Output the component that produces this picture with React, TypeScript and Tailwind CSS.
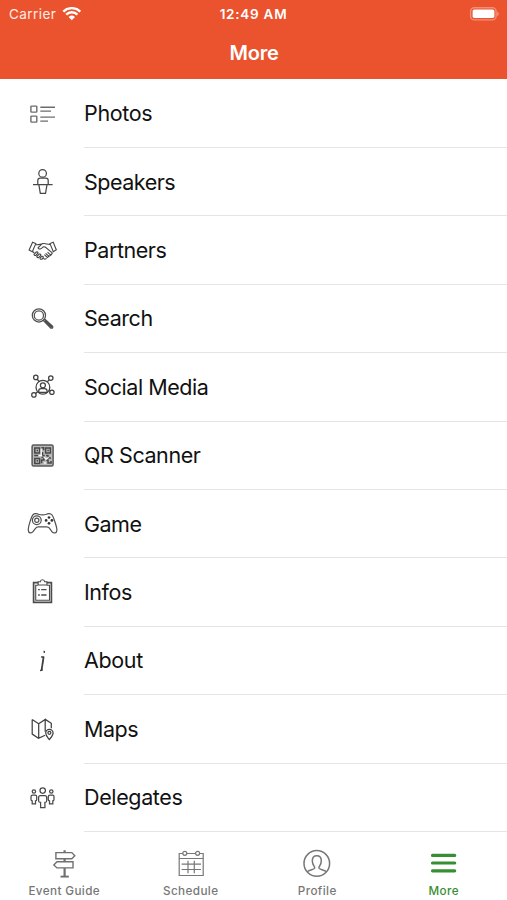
import type { ReactNode } from "react";

type MenuItem = {
  label: string;
  icon: ReactNode;
  spacing: string;
};

const menu: MenuItem[] = [
  {
    label: "Photos",
    spacing: "tracking-[-0.35px]",
    icon: (
      <g stroke="#6c6c6c" strokeWidth="1.4">
        <rect x="6.9" y="10.1" width="5.9" height="6" rx=".7" />
        <rect x="6.9" y="20.1" width="5.9" height="6" rx=".7" />
        <path d="M16.3 11.2H31M16.3 15.1H27M16.3 21.1H31M16.3 25.1H24" />
      </g>
    ),
  },
  {
    label: "Speakers",
    spacing: "tracking-[-0.48px]",
    icon: (
      <g stroke="#484848" strokeWidth="1.25">
        <circle cx="18.6" cy="9.4" r="3.8" />
        <path d="M13.8 20.5v-3.9q0-2.4 2.3-2.4h5.8q2.3 0 2.3 2.4v3.9M9 20.5h19.6M14.9 20.8l1.4 8.5h5.2l1.5-8.5" />
      </g>
    ),
  },
  {
    label: "Partners",
    spacing: "tracking-[-0.45px]",
    icon: (
      <g stroke="#444" strokeWidth="1.1">
        <path d="m8.6 10.3 3.2 1.3-3.5 8.2-3.2-1.8ZM29.2 10.3 26 11.6l3.3 8 3-1.8Z" />
        <path d="M11.5 12.5c3 .8 4.5-.4 6.5-.7l-4 4c.8 2.2 3.6 1.2 5.2-1l2.1.2 7.2 6.2M18 11.8c3.1-1 5.2.8 8 .6M8.6 19.4l1.6 1.6M10.1 22.3l2.2-2.3q1.7-.6 1.7 1l-2.2 2.4q-1.8.5-1.7-1.1ZM12.8 24.5l2.4-2.4q1.7-.4 1.6 1.3l-2.2 2.2q-1.7.3-1.8-1.1ZM16 26.2l1.7-1.8q1.6-.4 1.6 1.2l-1.3 1.6q-1.8.5-2-1ZM19.4 26.4l1.5.8 1.7-.8M20.4 22.7l3 2.8 1.6-1.2-3.4-3M25 24.2l1.8-1.1-3.3-3M26.8 23l1.7-1.8" />
      </g>
    ),
  },
  {
    label: "Search",
    spacing: "tracking-[-0.45px]",
    icon: (
      <g stroke="#505050" strokeWidth="1.25">
        <circle cx="14.9" cy="14.4" r="6.6" />
        <circle cx="14.9" cy="14.4" r="4.6" />
        <path d="m19.4 19.5 1.4-1.3 7.9 7.2q.6 2.2-1.9 1.7ZM21 19.5l6.8 6.7" />
      </g>
    ),
  },
  {
    label: "Social Media",
    spacing: "tracking-[-0.46px]",
    icon: (
      <g stroke="#414141" strokeWidth="1.25">
        <circle cx="18.9" cy="18.3" r="6.9" />
        <circle cx="18.9" cy="16.3" r="2.5" />
        <path d="M14.7 23.4V22q0-2.4 2.4-2.4h3.4q2.6 0 2.6 2.4v1.4Z" />
        <circle cx="11.8" cy="8.4" r="2.2" />
        <circle cx="26.8" cy="9.1" r="2.2" />
        <circle cx="9.9" cy="25.9" r="2.2" />
        <circle cx="27.9" cy="23.2" r="2.2" />
        <path d="m13.1 10.2 2.2 2.3M25.3 10.7l-2 2M11.5 24.5l2.1-1.8M24.9 21.1l1.2.8" />
      </g>
    ),
  },
  {
    label: "QR Scanner",
    spacing: "tracking-[-0.43px]",
    icon: (
      <g>
        <rect x="8.1" y="7" width="21" height="21" rx="1.5" fill="#b9b9b9" stroke="#5a5a5a" strokeWidth="1.5" />
        <path d="M10.8 10h4.8v5h-4.8ZM21.6 10h4.8v5h-4.8ZM10.8 20.4h4.8v5h-4.8Z" stroke="#484848" strokeWidth="1.5" />
        <path d="M12.6 11.8h1.4v1.4h-1.4ZM23.4 11.8h1.4v1.4h-1.4ZM12.6 22.1h1.4v1.4h-1.4Z" fill="#444" />
        <path d="M17.4 9.8h2.2v2.4M18.5 14v3.4h2.2M10.2 17.6h4M17.5 19.4h2.4v2.7h-2.3v3.2M22 17.4h2v2.5h3M22 21.9h2v3h3v-2" stroke="#484848" strokeWidth="1.5" />
        <path d="M17.2 10.7v6.4M14.6 17.7h3.6M19.6 18.9l2.6 2.4 2.4-2M21 23.9v2" stroke="#fff" strokeWidth="1.2" />
      </g>
    ),
  },
  {
    label: "Game",
    spacing: "tracking-[-0.5px]",
    icon: (
      <g stroke="#505050" strokeWidth="1.2">
        <path d="M9.2 8.5c1-.9 3.8-1.2 5.2-.2q4 1.3 8.1 0c1.6-1.1 4.2-.6 5.2.4 1.6 1.6 5.4 12.6 5.2 15.7-.3 3.2-3.4 3.2-5 1.2l-2.5-3.4q-1-1.3-2.7-1.3h-8.4q-1.7 0-2.8 1.4L9 25.7c-1.6 2-4.5 1.6-4.7-1.3-.3-3.1 3.1-14.2 4.9-15.9Z" />
        <circle cx="12.8" cy="14.3" r="4.4" />
        <circle cx="12.8" cy="14.3" r="2.1" />
        <g fill="#333" stroke="none">
          <circle cx="25" cy="11.5" r="1.35" />
          <circle cx="25" cy="17.3" r="1.35" />
          <circle cx="22.1" cy="14.4" r="1.35" />
          <circle cx="27.9" cy="14.4" r="1.35" />
        </g>
      </g>
    ),
  },
  {
    label: "Infos",
    spacing: "tracking-[-0.45px]",
    icon: (
      <g stroke="#4c4c4c" strokeWidth="1.1">
        <path d="M14.3 8.6H9.6v19.8h17.8V8.6h-4.7" strokeWidth="1.7" />
        <path d="M14 11.2h-2.3v15h13.8v-15H23M14.1 7.8h2.3q.1-2 2.1-2t2.1 2H23V11h-8.9Z" />
        <path d="M14.1 15.7h1.7M17.2 15.7h5.3M14.1 21h1.7M17.2 21h5.3" strokeWidth="1.3" />
      </g>
    ),
  },
  {
    label: "About",
    spacing: "tracking-[-0.35px]",
    icon: (
      <g stroke="#3c3c3c">
        <path d="m19.6 8.8 1.4.1" strokeWidth="2" />
        <path d="m17.1 14 2.3-.1-2 13.1M16 27.5l2.7-.5" strokeWidth="1.4" />
        <path d="m20 13.9-2 13.1" strokeWidth=".9" />
      </g>
    ),
  },
  {
    label: "Maps",
    spacing: "tracking-[-0.5px]",
    icon: (
      <g stroke="#404040" strokeWidth="1.25">
        <path d="M8.2 8.4v14.7l6.3 4.2 6.6-3.1M8.2 8.4l6.5 4.4V27M14.7 12.8l6.5-4.4v12.4M21.2 8.4l6.1 3.9v5" />
        <path d="M25.3 28.6c-1.9-2.5-3.6-4.3-3.6-6.6a3.7 3.7 0 0 1 7.4 0c0 2.3-1.7 4.1-3.8 6.6Z" />
        <circle cx="25.4" cy="21.8" r="1.5" />
      </g>
    ),
  },
  {
    label: "Delegates",
    spacing: "tracking-[-0.37px]",
    icon: (
      <g stroke="#484848" strokeWidth="1.25">
        <circle cx="18.7" cy="10.6" r="2.7" />
        <circle cx="9.9" cy="11.5" r="1.7" />
        <circle cx="27.3" cy="11.5" r="1.7" />
        <path d="M16.3 15.7h4.6q1.8 0 1.8 2V21q-.2 1.4-1.8 1.4v5.2h-4.3v-5.2q-1.8 0-2-1.4v-3.3q0-2 1.7-2ZM8.7 15.1h2.5q1.5 0 1.5 1.7v2.7q0 1.3-1.2 1.3v3.1H8.2v-3.1q-1.2 0-1.2-1.3v-2.7q0-1.7 1.7-1.7ZM26 15.1h2.5q1.5 0 1.5 1.7v2.7q0 1.3-1.2 1.3v3.1h-3.3v-3.1q-1.2 0-1.2-1.3v-2.7q0-1.7 1.7-1.7Z" />
      </g>
    ),
  },
];

const tabs = [
  {
    label: "Event Guide",
    icon: (
      <g stroke="#707070" strokeWidth="1.4">
        <path d="M8.9 6.6h15.9l3 3.1-3 3H8.9ZM26 15.7H10l-3.2 3.2 3.2 3h16Z" />
        <path d="M17.6 4.3v2.2M17.6 12.9v2.7M17.6 22.1v8.3" strokeWidth="2.2" />
        <path d="M13.5 30.6h8.3" strokeWidth="1.9" />
      </g>
    ),
  },
  {
    label: "Schedule",
    icon: (
      <g stroke="#777" strokeWidth="1.2">
        <path d="M8.6 7.5H5.2v22h24v-22h-3.4M12.8 7.5h8.8M5.2 12.5h24" />
        <circle cx="10.8" cy="7.3" r="2" />
        <circle cx="23.6" cy="7.3" r="2" />
        <path d="M14 14.8v12.4M20.3 14.8v12.4M7.6 18.2H27M7.6 23.5H27" />
      </g>
    ),
  },
  {
    label: "Profile",
    icon: (
      <g stroke="#777" strokeWidth="1.5">
        <circle cx="16.8" cy="17.4" r="12.8" />
        <path d="M7.3 25.8c1-1.5 6.6-2 7.3-3.5.3-1-.1-1.7-.6-2.3-1.2-1.6-1.7-3.3-1.7-5.2 0-3.1 1.6-5.1 4.5-5.1s4.5 2 4.5 5.1c0 2-.5 3.7-1.7 5.3-.5.5-.9 1.2-.6 2.2.7 1.5 6.3 2 7.3 3.5" />
      </g>
    ),
  },
  {
    label: "More",
    icon: <path d="M5.5 9.4h22.2M5.5 17h22.2M5.5 24.8h22.2" stroke="#388e32" strokeWidth="3.2" strokeLinecap="round" />,
  },
];

function StatusBar() {
  return (
    <div className="grid grid-cols-3 items-center h-7 px-2 text-[13.5px] text-white">
      <div className="flex items-center gap-1.5 pl-px">
        <span className="tracking-[0.45px] text-white/90">Carrier</span>
        <svg width="20" height="15" viewBox="0 0 20 15" fill="none" stroke="#fff">
          <path d="M1.3 4.6a12.2 12.2 0 0 1 17 0M4.2 7.6a8 8 0 0 1 11.2 0" strokeWidth="2.4" />
          <path d="m6.6 10.1 3.2 3.2 3.2-3.2a4.7 4.7 0 0 0-6.4 0Z" fill="#fff" stroke="none" />
        </svg>
      </div>
      <span className="text-center font-semibold whitespace-nowrap tracking-[0.75px]">12:49 AM</span>
      <svg className="justify-self-end" width="30" height="14" viewBox="0 0 30 14" fill="none">
        <rect x="1.6" y=".7" width="25.5" height="12.2" rx="3.6" stroke="#fff" strokeOpacity=".35" strokeWidth="1.4" />
        <rect x="3.6" y="2.4" width="21.8" height="8.6" rx="1.7" fill="#fff" />
        <path d="M28.3 4.7c1.8.6 1.8 3.8 0 4.4Z" fill="#fff" fillOpacity=".45" />
      </svg>
    </div>
  );
}

export default function App() {
  return (
    <main className="w-full h-[900px] flex flex-col overflow-hidden bg-white font-['Inter',sans-serif]">
      <header className="h-[79px] shrink-0 bg-[#ea532d]">
        <StatusBar />
        <h1 className="h-12 text-center text-white text-[20px] leading-[50px] font-semibold tracking-[-0.2px] pl-px">More</h1>
      </header>
      <ul className="shrink-0 pt-[0.7px]">
        {menu.map((item) => (
          <li key={item.label} className="flex h-[68.4px] pl-6">
            <svg className="mt-[16px] shrink-0" width="36" height="36" viewBox="0 0 36 36" fill="none">
              {item.icon}
            </svg>
            <div className={`ml-6 mt-[-0.4px] flex-1 border-b border-[#e5e5e6] text-[21.5px] leading-[68px] text-[#111] ${item.spacing}`}>
              {item.label}
            </div>
          </li>
        ))}
      </ul>
      <nav className="flex-1 grid grid-cols-4 pl-px">
        {tabs.map((tab) => (
          <a key={tab.label} href="#" className="flex flex-col items-center pt-[14px]">
            <svg width="34" height="34" viewBox="0 0 34 34" fill="none">
              {tab.icon}
            </svg>
            <span
              className={`mt-[3px] text-[11.7px] leading-4 font-medium tracking-[0.4px] whitespace-nowrap ${
                tab.label === "More" ? "text-[#388e32]" : "text-[#777]"
              }`}
            >
              {tab.label}
            </span>
          </a>
        ))}
      </nav>
    </main>
  );
}
